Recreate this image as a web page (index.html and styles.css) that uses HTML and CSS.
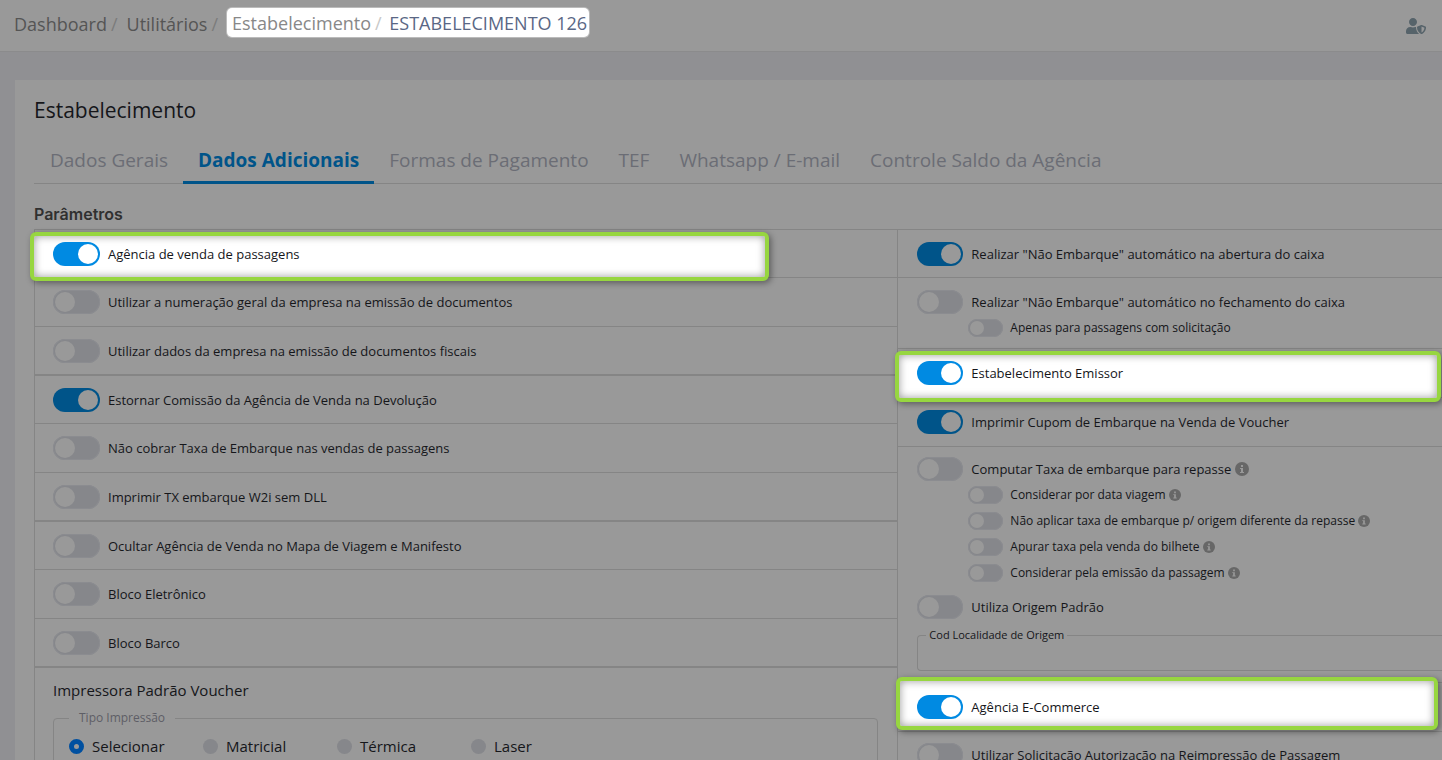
FILE: index.html
```html
<!DOCTYPE html>
<html lang="pt-BR">
<head>
<meta charset="utf-8">
<title>Estabelecimento</title>
<link rel="stylesheet" href="styles.css">
</head>
<body>
<svg class="sprite" aria-hidden="true">
  <symbol id="info" viewBox="0 0 14 14">
    <circle cx="7" cy="7" r="7" fill="#676767"/>
    <path d="M6 3h2v2H6zM5 6h3v4h1v1H5v-1h1V7H5z" fill="#999"/>
  </symbol>
</svg>
<header class="topbar">
  <nav aria-label="Navegação">
    <ol class="crumbs">
      <li><a href="#">Dashboard</a><span class="sep">/</span></li>
      <li><a href="#">Utilitários</a><span class="sep">/</span></li>
      <li class="spot">
        <a href="#">Estabelecimento</a><span class="sep">/</span>
        <span class="current">ESTABELECIMENTO 126</span>
      </li>
    </ol>
  </nav>
  <button class="user" type="button" aria-label="Perfil">
    <svg viewBox="0 0 640 512" aria-hidden="true"><path d="M622.3 271.1l-115.2-45c-4.1-1.6-12.6-3.7-22.2 0l-115.2 45c-10.7 4.2-17.7 14-17.7 24.9 0 111.6 68.7 188.8 132.9 213.9 9.6 3.7 18 1.6 22.2 0C558.4 489.9 640 420.5 640 296c0-10.9-7-20.7-17.7-24.9zM496 462.4V273.3l95.5 37.3c-5.6 87.1-60.9 135.4-95.5 151.8zM224 256c70.7 0 128-57.3 128-128S294.7 0 224 0 96 57.3 96 128s57.3 128 128 128zm96 40c0-2.5.8-4.8 1.1-7.2-2.5-.1-4.9-.8-7.5-.8h-16.7c-22.2 10.2-46.9 16-72.9 16s-50.6-5.8-72.9-16h-16.7C60.2 288 0 348.2 0 422.4V464c0 26.5 21.5 48 48 48h352c6.8 0 13.3-1.5 19.2-4-54-42.9-99.2-116.7-99.2-212z"/></svg>
  </button>
</header>

<main class="card">
  <h1>Estabelecimento</h1>
  <nav class="tabs">
    <a href="#">Dados Gerais</a>
    <a href="#" class="active">Dados Adicionais</a>
    <a href="#">Formas de Pagamento</a>
    <a href="#">TEF</a>
    <a href="#">Whatsapp / E-mail</a>
    <a href="#">Controle Saldo da Agência</a>
  </nav>
  <h2>Parâmetros</h2>
  <form class="params">
    <div class="col left">
      <div class="row lit lit-a"><label class="opt"><input type="checkbox" class="switch" checked>Agência de venda de passagens</label></div>
      <div class="row"><label class="opt"><input type="checkbox" class="switch">Utilizar a numeração geral da empresa na emissão de documentos</label></div>
      <div class="row"><label class="opt"><input type="checkbox" class="switch">Utilizar dados da empresa na emissão de documentos fiscais</label></div>
      <div class="row"><label class="opt"><input type="checkbox" class="switch" checked>Estornar Comissão da Agência de Venda na Devolução</label></div>
      <div class="row"><label class="opt"><input type="checkbox" class="switch">Não cobrar Taxa de Embarque nas vendas de passagens</label></div>
      <div class="row"><label class="opt"><input type="checkbox" class="switch">Imprimir TX embarque W2i sem DLL</label></div>
      <div class="row"><label class="opt"><input type="checkbox" class="switch">Ocultar Agência de Venda no Mapa de Viagem e Manifesto</label></div>
      <div class="row"><label class="opt"><input type="checkbox" class="switch">Bloco Eletrônico</label></div>
      <div class="row"><label class="opt"><input type="checkbox" class="switch">Bloco Barco</label></div>
      <div class="printer">
        <h3>Impressora Padrão Voucher</h3>
        <fieldset class="kinds">
          <legend>Tipo Impressão</legend>
          <label><input type="radio" name="tipo" checked>Selecionar</label>
          <label><input type="radio" name="tipo">Matricial</label>
          <label><input type="radio" name="tipo">Térmica</label>
          <label><input type="radio" name="tipo">Laser</label>
        </fieldset>
      </div>
    </div>
    <div class="col right">
      <div class="row"><label class="opt"><input type="checkbox" class="switch" checked>Realizar "Não Embarque" automático na abertura do caixa</label></div>
      <div class="row stack">
        <label class="opt"><input type="checkbox" class="switch">Realizar "Não Embarque" automático no fechamento do caixa</label>
        <label class="opt sub"><input type="checkbox" class="switch">Apenas para passagens com solicitação</label>
      </div>
      <div class="row lit lit-b"><label class="opt"><input type="checkbox" class="switch" checked>Estabelecimento Emissor</label></div>
      <div class="row"><label class="opt"><input type="checkbox" class="switch" checked>Imprimir Cupom de Embarque na Venda de Voucher</label></div>
      <div class="row stack group">
        <label class="opt"><input type="checkbox" class="switch">Computar Taxa de embarque para repasse<svg class="info"><use href="#info"/></svg></label>
        <label class="opt sub"><input type="checkbox" class="switch">Considerar por data viagem<svg class="info"><use href="#info"/></svg></label>
        <label class="opt sub"><input type="checkbox" class="switch">Não aplicar taxa de embarque p/ origem diferente da repasse<svg class="info"><use href="#info"/></svg></label>
        <label class="opt sub"><input type="checkbox" class="switch">Apurar taxa pela venda do bilhete<svg class="info"><use href="#info"/></svg></label>
        <label class="opt sub"><input type="checkbox" class="switch">Considerar pela emissão da passagem<svg class="info"><use href="#info"/></svg></label>
        <label class="opt origin"><input type="checkbox" class="switch">Utiliza Origem Padrão</label>
        <fieldset class="field">
          <legend><label for="cod">Cod Localidade de Origem</label></legend>
          <input id="cod" type="text">
        </fieldset>
      </div>
      <div class="row lit lit-c"><label class="opt"><input type="checkbox" class="switch" checked>Agência E-Commerce</label></div>
      <div class="row"><label class="opt"><input type="checkbox" class="switch">Utilizar Solicitação Autorização na Reimpressão de Passagem</label></div>
    </div>
  </form>
</main>
</body>
</html>
```
FILE: styles.css
```css
* { box-sizing: border-box; }

html { scrollbar-width: none; }

body {
  --line: #858585;
  --surface: #999;
  margin: 0;
  background: #909093;
  color: #15161a;
  font: 13px/20px "Open Sans", sans-serif;
  overflow-x: hidden;
}

a { color: inherit; text-decoration: none; }

.sprite { position: absolute; width: 0; height: 0; }

.topbar {
  display: flex;
  align-items: center;
  justify-content: space-between;
  height: 52px;
  padding: 0 16px 4px 14px;
  background: var(--surface);
  border-bottom: 1px solid #8b8b8c;
}

.crumbs {
  display: flex;
  align-items: center;
  margin: 0;
  padding: 0;
  list-style: none;
  color: #555;
  font-size: 18px;
  line-height: 28px;
  white-space: nowrap;
}

.sep { margin: 0 9px 0 4px; color: #7c7c7c; }

.spot {
  margin-top: -2px;
  padding: 2px 2px 0 5px;
  line-height: 27px;
  border-radius: 5px;
  background: #fff;
  box-shadow: 0 0 0 1px #bbb;
  color: #888;
}

.spot .sep { margin-right: 3px; color: #c8c8c8; }
.current { color: #5a6785; }

.user {
  width: 20px;
  height: 16px;
  margin-top: 4px;
  padding: 0;
  border: 0;
  background: none;
}

.user svg { display: block; width: 20px; height: 16px; fill: #56636a; }

.card {
  margin: 28px 0 0 15px;
  padding: 16px 0 0 19px;
  background: var(--surface);
}

h1, h2, h3 { margin: 0; font-weight: 400; }
h1 { font-size: 21px; line-height: 28px; }

.tabs {
  display: flex;
  margin-top: 12px;
  padding-left: 1px;
  border-bottom: 1px solid var(--line);
  color: #6b6d75;
  font-size: 19px;
  line-height: 28px;
  white-space: nowrap;
}

.tabs a { padding: 10px 15px 7px; border-bottom: 3px solid transparent; margin-bottom: -1px; }
.tabs .active { border-color: #005489; color: #005489; font-weight: 700; }

h2 {
  margin: 20px 0 5px;
  color: #303030;
  font: 600 16px/20px Inter, sans-serif;
}

.params {
  display: grid;
  grid-template-columns: 19fr 12fr;
  border: solid var(--line);
  border-width: 1px 0 0 1px;
}

.col { min-width: 0; white-space: nowrap; }
.right { border-left: 1px solid var(--line); }

.row {
  display: flex;
  align-items: center;
  min-height: 49px;
  padding: 0 18px;
  border-bottom: 1px solid var(--line);
}

.right .row { padding: 0 0 0 19px; }
.left .row:nth-child(3n+1), .right .row:first-child { min-height: 48px; }
.right .row:last-child { min-height: 47px; }
.left .row:nth-child(3n) { border-bottom-width: 2px; }
.right .stack { display: block; padding-top: 12px; padding-bottom: 7px; }
.right .group { padding-top: 10px; padding-bottom: 11px; }
.stack .opt:first-child { margin-bottom: 1px; }

.opt {
  display: flex;
  align-items: center;
  gap: 8px;
  height: 24px;
}

.switch {
  flex: none;
  width: 47px;
  height: 24px;
  margin: 0;
  padding: 2px;
  border-radius: 12px;
  appearance: none;
  background: #86878b;
  box-shadow: inset 0 0 0 1px #8b8c90;
}

.right .switch { width: 46px; }

.switch::before {
  content: "";
  display: block;
  width: 20px;
  height: 20px;
  border-radius: 50%;
  background: var(--surface);
}

.switch:checked { background: #005489; box-shadow: none; }
.switch:checked::before { margin-left: auto; }

.sub { height: 26px; margin-left: 51px; gap: 7px; font-size: 12px; }
.right .sub .switch { width: 35px; height: 18px; }
.sub .switch::before { width: 14px; height: 14px; }
.origin { margin-top: 9px; }

.info { flex: none; width: 14px; height: 14px; margin-left: -4px; }
.sub .info { width: 12px; height: 12px; }

.lit { position: relative; --surface: #fff; }
.lit .opt { position: relative; }
.lit .switch:checked { background: #008ae2; }

.lit::before {
  content: "";
  position: absolute;
  inset: 2px 128px -4px -5px;
  border: 4px solid #97d640;
  border-radius: 6px;
  background: #fff;
  box-shadow: 2px 2px 6px #0006, inset 0 0 9px #0006;
}

.lit-b::before { inset: 2px 1px -5px -3px; }
.lit-c::before { inset: -6px 4px 1px -2px; }

fieldset {
  min-width: 0;
  margin: 0;
  border: 1px solid var(--line);
  border-radius: 4px;
}

.field {
  margin-top: 8px;
  padding: 0;
  border-right: 0;
  border-radius: 4px 0 0 4px;
  font-size: 11px;
  line-height: 16px;
}

.field legend { margin-left: 8px; padding: 0 3px; }

.field input {
  display: block;
  width: 100%;
  height: 27px;
  padding: 0 12px;
  border: 0;
  background: none;
  font: inherit;
}

.printer { padding: 10px 19px 0 18px; }
h3 { font-size: 15px; line-height: 24px; }

.kinds {
  display: flex;
  margin-top: 6px;
  padding: 6px 15px 16px;
  font-size: 15px;
  line-height: 24px;
}

.kinds legend { padding: 0 10px; color: #5e5e66; font-size: 12px; line-height: 20px; }
.kinds label { display: flex; align-items: center; gap: 8px; width: 134px; }

.kinds input {
  width: 15px;
  height: 15px;
  margin: 0;
  border-radius: 50%;
  appearance: none;
  background: #86878b;
}

.kinds input:checked { border: 5px solid #0050a0; background: var(--surface); }
```
